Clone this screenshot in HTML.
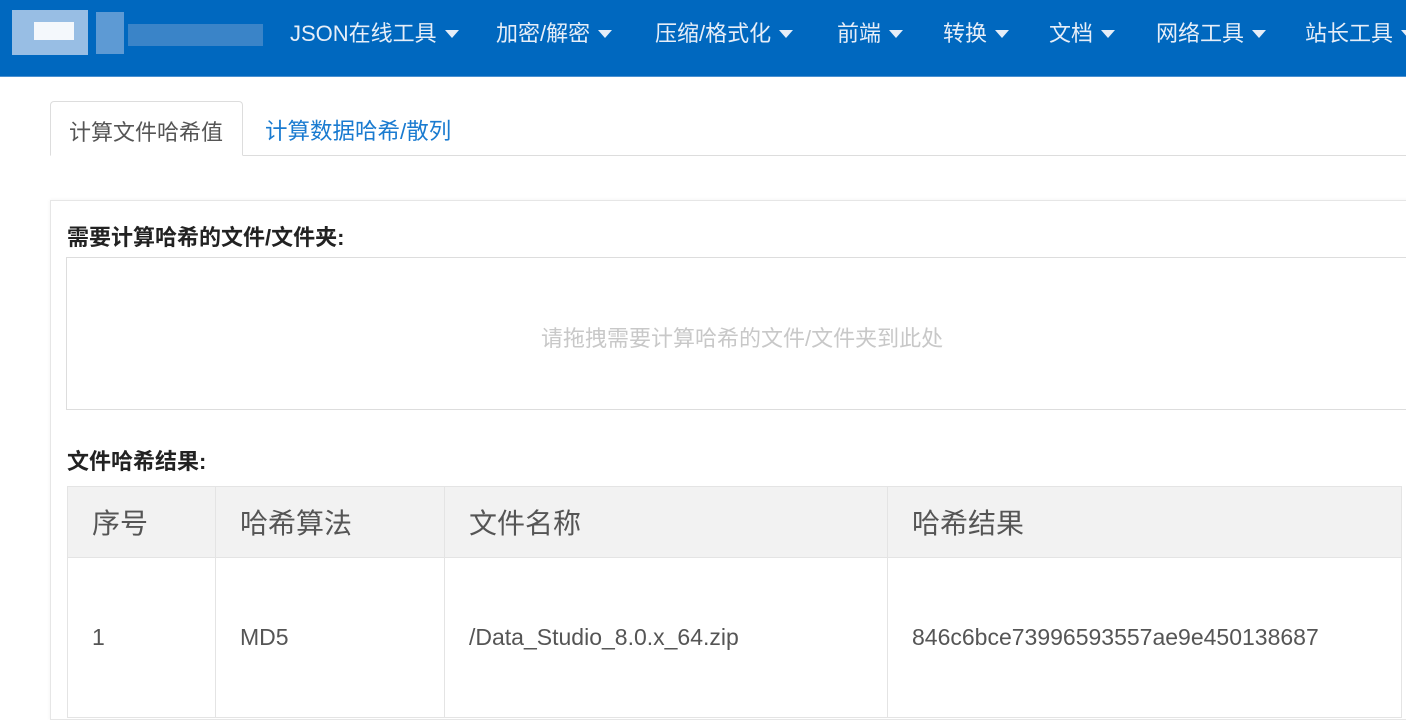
<!DOCTYPE html>
<html><head><meta charset="utf-8"><style>
*{box-sizing:border-box;margin:0;padding:0}
body{width:1406px;height:696px;overflow:hidden;background:#fff;font-family:"Liberation Sans","Noto Sans CJK SC",sans-serif;color:#333;position:relative}
.nav{position:absolute;left:0;top:0;width:1406px;height:77px;background:#0068bf;border-bottom:1px solid #4a90d0}
.nav .it{position:absolute;top:16px;color:#e6eef8;font-size:22px;white-space:nowrap}
.car{display:inline-block;width:0;height:0;border-left:7px solid transparent;border-right:7px solid transparent;border-top:8px solid #e6eef8;vertical-align:middle;margin-left:8px;margin-top:-3px}
.tabs{position:absolute;left:50px;top:101px;right:0;height:55px;border-bottom:1px solid #ddd}
.tab1{position:absolute;left:0;top:0;width:193px;height:55px;border:1px solid #ddd;border-bottom:1px solid #fff;border-radius:4px 4px 0 0;background:#fff;font-size:22px;color:#555;padding:13px 0 0 18px;white-space:nowrap}
.tab2{position:absolute;left:215px;top:13px;font-size:22.5px;color:#1a7bd0}
.card{position:absolute;left:50px;top:200px;width:1400px;height:520px;border:1px solid #e6e6e6;box-shadow:0 0 4px rgba(0,0,0,.06)}
.lbl{position:absolute;font-size:22px;font-weight:bold;color:#222}
.drop{position:absolute;left:66px;top:257px;width:1360px;height:153px;border:1px solid #ddd}
.drop span{position:absolute;left:474px;top:63px;font-size:22px;color:#c8c8c8}
table{position:absolute;left:67px;top:486px;border-collapse:collapse;font-size:23px;color:#555}
td,th{border:1px solid #e4e4e4;text-align:left;font-weight:normal;padding-left:24px}
th{background:#f2f2f2;height:71px;font-size:28px}
td{height:160px;padding-top:0}
</style></head><body>
<div class="nav">
<div style="position:absolute;left:12px;top:10px;width:76px;height:45px;background:#a8c8e8;opacity:.9"></div>
<div style="position:absolute;left:34px;top:22px;width:40px;height:18px;background:#f4f8fc"></div>
<div style="position:absolute;left:96px;top:12px;width:28px;height:42px;background:#5d9ad4"></div>
<div style="position:absolute;left:128px;top:24px;width:135px;height:22px;background:#3a84c8"></div>
<div class="it" style="left:290px">JSON在线工具<span class="car"></span></div>
<div class="it" style="left:496px">加密/解密<span class="car"></span></div>
<div class="it" style="left:655px">压缩/格式化<span class="car"></span></div>
<div class="it" style="left:837px">前端<span class="car"></span></div>
<div class="it" style="left:943px">转换<span class="car"></span></div>
<div class="it" style="left:1049px">文档<span class="car"></span></div>
<div class="it" style="left:1156px">网络工具<span class="car"></span></div>
<div class="it" style="left:1305px">站长工具<span class="car"></span></div>
</div>
<div class="tabs"><div class="tab1">计算文件哈希值</div><div class="tab2">计算数据哈希/散列</div></div>
<div class="card"></div>
<div class="lbl" style="left:67px;top:220px">需要计算哈希的文件/文件夹:</div>
<div class="drop"><span>请拖拽需要计算哈希的文件/文件夹到此处</span></div>
<div class="lbl" style="left:67px;top:444px">文件哈希结果:</div>
<table>
<tr><th style="width:148px">序号</th><th style="width:229px">哈希算法</th><th style="width:443px">文件名称</th><th style="width:514px">哈希结果</th></tr>
<tr><td>1</td><td>MD5</td><td>/Data_Studio_8.0.x_64.zip</td><td>846c6bce73996593557ae9e450138687</td></tr>
</table>
</body></html>
